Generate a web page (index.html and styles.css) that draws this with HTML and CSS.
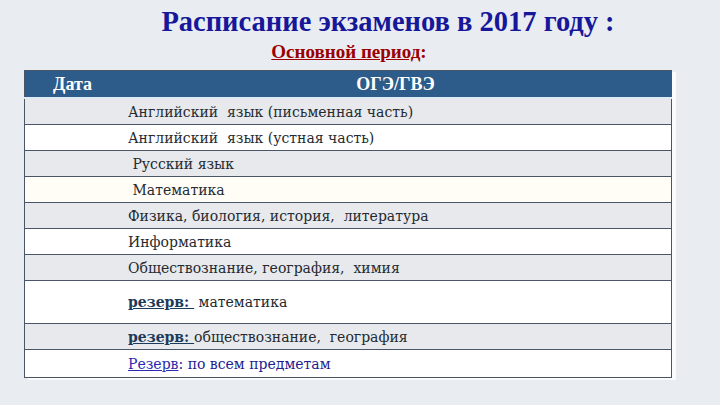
FILE: index.html
```html
<!DOCTYPE html>
<html lang="ru">
<head>
<meta charset="utf-8">
<title>Расписание экзаменов</title>
<link rel="stylesheet" href="styles.css">
</head>
<body>
<div class="slide">
  <h1 class="title">Расписание экзаменов в 2017 году :</h1>
  <p class="subtitle"><span class="period">Основной период</span>:</p>
  <table class="schedule">
    <thead>
      <tr class="head">
        <th class="c-date">Дата</th>
        <th class="c-exam">ОГЭ/ГВЭ</th>
      </tr>
    </thead>
    <tbody>
      <tr class="odd"><td class="c-date"></td><td class="c-exam">Английский&nbsp; язык (письменная часть)</td></tr>
      <tr class="even"><td class="c-date"></td><td class="c-exam">Английский&nbsp; язык (устная часть)</td></tr>
      <tr class="odd"><td class="c-date"></td><td class="c-exam">&nbsp;Русский язык</td></tr>
      <tr class="even cream"><td class="c-date"></td><td class="c-exam">&nbsp;Математика</td></tr>
      <tr class="odd"><td class="c-date"></td><td class="c-exam">Физика, биология, история,&nbsp; литература</td></tr>
      <tr class="even"><td class="c-date"></td><td class="c-exam">Информатика</td></tr>
      <tr class="odd"><td class="c-date"></td><td class="c-exam">Обществознание, география,&nbsp; химия</td></tr>
      <tr class="even tall"><td class="c-date"></td><td class="c-exam"><span class="reserve">резерв:&nbsp;</span> математика</td></tr>
      <tr class="odd"><td class="c-date"></td><td class="c-exam"><span class="reserve">резерв:&nbsp;</span>обществознание,&nbsp; география</td></tr>
      <tr class="even last"><td class="c-date"></td><td class="c-exam blue"><span class="reserve-link">Резерв</span>: по всем предметам</td></tr>
    </tbody>
  </table>
</div>
</body>
</html>
```
FILE: styles.css
```css
html, body {
  margin: 0;
  padding: 0;
}
body {
  width: 720px;
  height: 405px;
  overflow: hidden;
  background: #e9edf2;
  font-family: "Liberation Serif", serif;
}
.slide {
  padding-top: 6px;
}
.title {
  margin: 0;
  padding-left: 56px;
  text-align: center;
  font-family: "Liberation Serif", serif;
  font-weight: bold;
  font-size: 28.5px;
  line-height: 32px;
  color: #17179a;
}
.subtitle {
  margin: 4px 0 0;
  padding-right: 22px;
  text-align: center;
  font-family: "Liberation Serif", serif;
  font-weight: bold;
  font-size: 19px;
  line-height: 19px;
  color: #9a0000;
}
.period {
  text-decoration: underline;
}
.schedule {
  margin: 9px 0 0 24px;
  width: 648px;
  border-collapse: collapse;
  border: 1px solid #4a5568;
  box-shadow: 4px 2px 0 rgba(255, 255, 255, 0.75);
}
.schedule th,
.schedule td {
  padding: 0;
  height: 25px;
  text-align: left;
  vertical-align: middle;
  font-family: "DejaVu Serif", "Liberation Serif", serif;
  font-size: 14px;
  color: #252a30;
}
.head th {
  height: 26px;
  background: #2d5b8a;
  color: #ffffff;
  font-family: "Liberation Serif", serif;
  font-weight: bold;
  font-size: 18px;
  border-bottom: 2px solid #dfe9f3;
}
.head .c-exam {
  text-align: center;
  padding-right: 8px;
}
.c-date {
  width: 75px;
  padding-left: 28px !important;
}
.c-exam {
  padding-left: 0;
  white-space: pre;
}
tbody tr {
  border-top: 1px solid #4a5568;
}
tbody tr:first-child {
  border-top: none;
}
.odd td {
  background: #e7e9ed;
}
.even td {
  background: #ffffff;
}
.cream td {
  background: #fffdf6;
}
.tall td {
  height: 42px;
}
.last td {
  height: 27px;
}
.reserve {
  font-weight: bold;
  color: #1b3b5c;
  text-decoration: underline;
}
.blue {
  color: #1d1d8f !important;
}
.reserve-link {
  color: #2a2ab0;
  text-decoration: underline;
}
```
